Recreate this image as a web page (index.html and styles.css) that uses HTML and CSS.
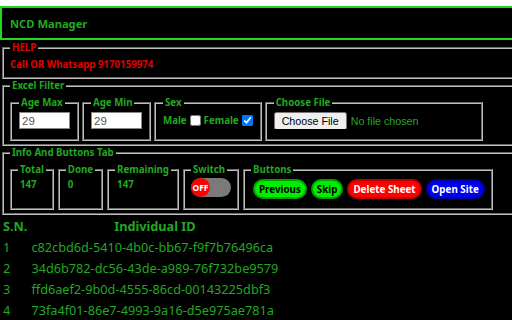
FILE: index.html
```html
<!DOCTYPE html>
<html>
<head>
<meta charset="utf-8">
<link rel="stylesheet" href="styles.css">
</head>
<body>
<div class="page">
  <header class="topbar">NCD Manager</header>

  <fieldset class="box help">
    <legend class="help-legend">HELP</legend>
    <div class="help-text">Call OR Whatsapp 9170159974</div>
  </fieldset>

  <fieldset class="box">
    <legend>Excel Filter</legend>
    <div class="row">
      <fieldset class="sub filt">
        <legend>Age Max</legend>
        <input class="age" type="text" value="29">
      </fieldset>
      <fieldset class="sub filt">
        <legend>Age Min</legend>
        <input class="age" type="text" value="29">
      </fieldset>
      <fieldset class="sub filt">
        <legend>Sex</legend>
        <div class="sexrow">
          <label class="sex">Male <input type="checkbox"></label>
          <label class="sex">Female <input type="checkbox" checked></label>
        </div>
      </fieldset>
      <fieldset class="sub filt">
        <legend>Choose File</legend>
        <input class="file" type="file">
      </fieldset>
    </div>
  </fieldset>

  <fieldset class="box info">
    <legend>Info And Buttons Tab</legend>
    <div class="row stats">
      <fieldset class="sub stat">
        <legend>Total</legend>
        <div class="num">147</div>
      </fieldset>
      <fieldset class="sub stat">
        <legend>Done</legend>
        <div class="num">0</div>
      </fieldset>
      <fieldset class="sub stat">
        <legend>Remaining</legend>
        <div class="num">147</div>
      </fieldset>
      <fieldset class="sub stat">
        <legend>Switch</legend>
        <div class="switch"><span class="knob">OFF</span></div>
      </fieldset>
      <fieldset class="sub stat">
        <legend>Buttons</legend>
        <div class="btns">
          <button class="btn green">Previous</button>
          <button class="btn green">Skip</button>
          <button class="btn red">Delete Sheet</button>
          <button class="btn blue">Open Site</button>
        </div>
      </fieldset>
    </div>
  </fieldset>

  <table class="list">
    <thead>
      <tr><th>S.N.</th><th>Individual ID</th></tr>
    </thead>
    <tbody>
      <tr><td>1</td><td>c82cbd6d-5410-4b0c-bb67-f9f7b76496ca</td></tr>
      <tr><td>2</td><td>34d6b782-dc56-43de-a989-76f732be9579</td></tr>
      <tr><td>3</td><td>ffd6aef2-9b0d-4555-86cd-00143225dbf3</td></tr>
      <tr><td>4</td><td>73fa4f01-86e7-4993-9a16-d5e975ae781a</td></tr>
    </tbody>
  </table>
</div>
</body>
</html>
```

FILE: styles.css
```css
html {
  background: #fff;
}
body {
  margin: 6px 0 0;
  background: #000;
  font-family: "Noto Sans", "Open Sans", sans-serif;
  color: #22a822;
}
.page {
  width: 530px;
}
.topbar {
  height: 30px;
  border: 2px solid #1fd81f;
  padding-left: 8px;
  display: flex;
  align-items: center;
  font-weight: bold;
  font-size: 11.2px;
  color: #22a822;
}
.box {
  margin: 0 2px;
  border: 2px groove #c0c0c0;
  padding: 3px 6px 3px;
  min-width: 0;
}
.help {
  margin-top: 1px;
  padding: 3px 6px 6px;
}
.info {
  padding-bottom: 3px;
}
legend {
  font-weight: bold;
  font-size: 9.7px;
  line-height: 14px;
  color: #22a822;
  padding: 0 2px;
  white-space: nowrap;
}
.help-legend {
  color: #e00000;
}
.help-text {
  color: #e00000;
  font-weight: bold;
  font-size: 9.7px;
  line-height: 13px;
  white-space: nowrap;
}
.row {
  display: flex;
  align-items: flex-start;
  gap: 3px;
}
.stats {
  gap: 4px;
}
.sub {
  flex: none;
  margin: 0;
  border: 2px groove #c0c0c0;
  padding: 2px 7px 10px;
  white-space: nowrap;
}
.age {
  display: block;
  width: 45px;
  height: 13px;
  margin: 0;
  border: 1px solid #888;
  padding: 1px 2px;
  font-family: "Liberation Sans", Arial, sans-serif;
  font-size: 11.5px;
  color: #555;
}
.sexrow {
  height: 17px;
  display: flex;
  align-items: center;
  gap: 3px;
}
.sex {
  font-weight: bold;
  font-size: 9.7px;
  display: flex;
  align-items: center;
}
.sex input {
  width: 11px;
  height: 11px;
  margin: 0 0 0 3px;
}
.file {
  display: block;
  width: 200px;
  height: 17px;
  margin: 0;
  font-family: "Liberation Sans", Arial, sans-serif;
  font-size: 10.7px;
  color: #22a822;
}
.stat {
  height: 43px;
  padding: 0 6px;
}
.num {
  font-weight: bold;
  font-size: 9.7px;
  line-height: 13px;
  padding: 1px 0 0 2px;
}
.switch {
  margin-top: 1px;
  width: 40px;
  height: 19px;
  border-radius: 10px;
  background: #7a7a7a;
  display: flex;
}
.knob {
  width: 19px;
  height: 19px;
  border-radius: 50%;
  background: #ff0000;
  color: #fff;
  font-size: 8.5px;
  font-weight: bold;
  display: flex;
  align-items: center;
  justify-content: center;
}
.btns {
  margin: 2px 0 0 2px;
  display: flex;
  gap: 4px;
}
.btn {
  font-family: "Noto Sans", sans-serif;
  font-weight: bold;
  font-size: 9.8px;
  border-radius: 10px;
  padding: 0 4px;
  height: 20px;
  border: 2px solid;
  white-space: nowrap;
}
.green {
  background: #00ee00;
  border-color: #00a000;
  color: #000;
}
.red {
  background: #ff0000;
  border-color: #c00000;
  color: #fff;
}
.blue {
  background: #0000ee;
  border-color: #0000a0;
  color: #fff;
}
.list {
  font-size: 12.7px;
  line-height: 17px;
}
.list th {
  font-weight: bold;
  padding: 1px;
}
.list td {
  padding: 1px;
}
```
